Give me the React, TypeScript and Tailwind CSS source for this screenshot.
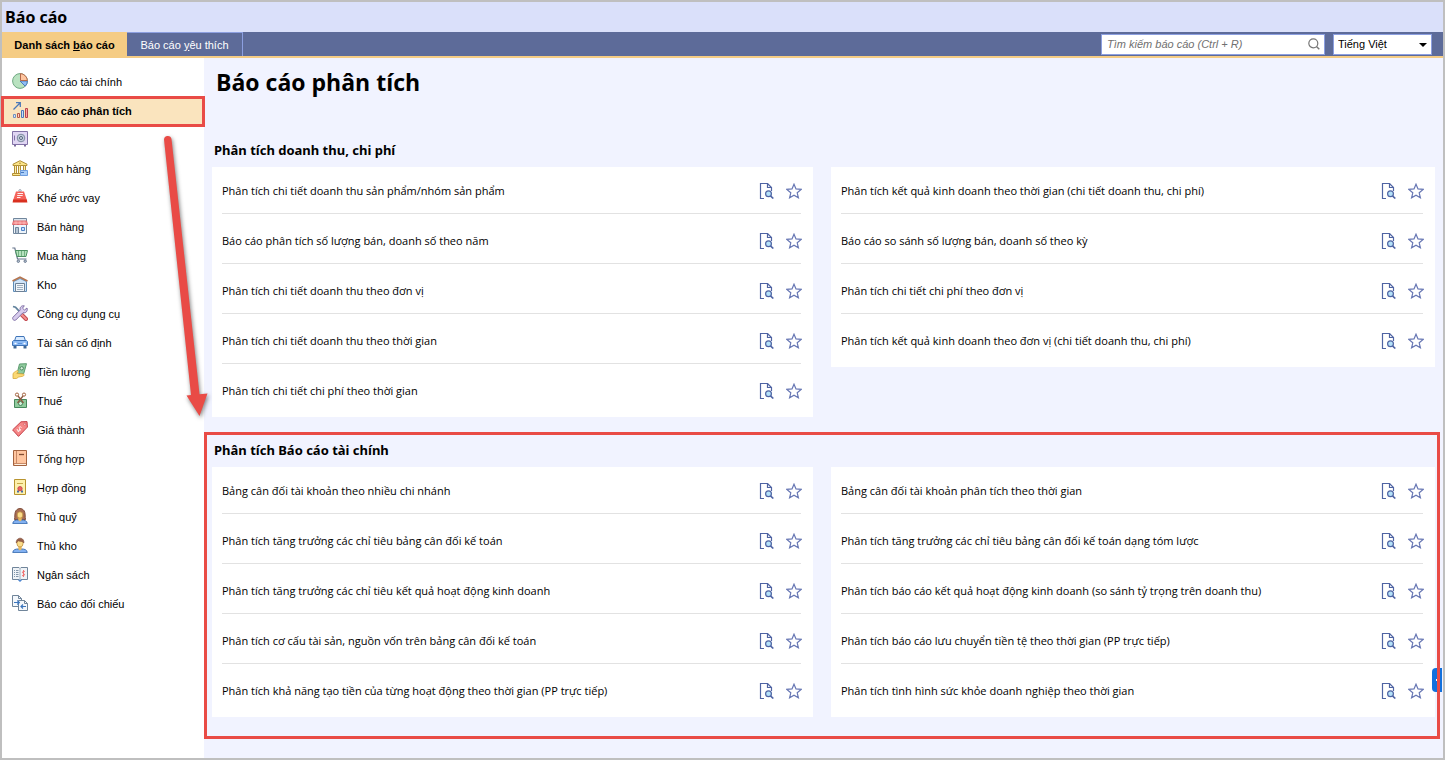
import React, { useState } from 'react';

const Icon = ({ children }: { children: React.ReactNode }) => (
    <svg viewBox="0 0 16 16" className="w-4 h-4 shrink-0 mb-[3px]" fill="none" aria-hidden="true">
        {children}
    </svg>
);

const PieIcon = () => (
    <Icon>
        <circle cx="8" cy="8" r="7.4" fill="#b9e2c0" stroke="#6fa882" />
        <path d="M8 8h7.4a7.4 7.4 0 0 1-2.2 5.2z" fill="#8fbdf5" stroke="#4a78b8" />
        <path d="M8.5 7.5V.6a7.4 7.4 0 0 1 6.9 6.9z" fill="#ffc6a0" stroke="#b5694a" />
    </Icon>
);

const GrowthIcon = () => (
    <Icon>
        <path d="M1.5 7.5L8 1M4 .7H8.3V5" stroke="#4a78b8" strokeWidth="1.3" />
        <path d="M1.5 12.5h2v3h-2z" fill="#dbe8f8" stroke="#6f8fbe" />
        <path d="M5.500 11.500h2v4h-2z" fill="#ffd2c0" stroke="#b5594a" />
        <path d="M9.5 8.500h2v7h-2z" fill="#c9dffa" stroke="#4a78b8" />
        <path d="M13.500 6.500h2v9h-2z" fill="#f8a5a5" stroke="#b9434a" />
    </Icon>
);

const SafeIcon = () => (
    <Icon>
        <path d="M3 13.5V15.5M13 13.5V15.5" stroke="#7b6a9c" strokeWidth="2" />
        <path d="M.5 .5h15v13H.5z" fill="#e0d6f3" stroke="#8272a6" />
        <circle cx="9" cy="7" r="3.8" fill="#c3cddb" stroke="#7d8ba0" />
        <circle cx="9" cy="7" r="1.500" fill="#dde5ef" stroke="#56657c" />
        <path d="M2.500 4.500v5" stroke="#8272a6" />
    </Icon>
);

const BankIcon = () => (
    <Icon>
        <path d="M8 .7l7 3.500v1.300H1V4.200z" fill="#fbe488" stroke="#b28f35" />
        <path d="M2.500 5.500v8h2v-8zM6.500 5.500v8h2v-8zM11.500 5.500v6h2v-6z" fill="#fff0b0" stroke="#b28f35" />
        <path d="M.5 15.500v-2h8v2z" fill="#fbe488" stroke="#b28f35" />
        <path d="M8.500 10.500h7v5h-7z" fill="#a9cdf8" stroke="#6d9de0" />
        <path d="M9 12.500h3" stroke="#4779c0" />
        <circle cx="8" cy="3.300" r=".8" fill="#b28f35" />
    </Icon>
);

const LoanIcon = () => (
    <Icon>
        <circle cx="8" cy="1.800" r="1.200" stroke="#9aa3b0" />
        <path d="M4 2.500h8L15.200 12H.8z" fill="#f4625a" />
        <path d="M1.200 10.500h13.600l.6 3H.6z" fill="#d9301f" />
        <path d="M5.500 4.500h5.500M5.200 6.500h5.500M5 8.500h3.500" stroke="#fff" strokeWidth=".9" />
    </Icon>
);

const ShopIcon = () => (
    <Icon>
        <path d="M1.500 .5h13v3h-13z" fill="#dbe5ee" stroke="#71869c" />
        <path d="M1.500 6.500v9h13v-9z" fill="#eef4fa" stroke="#71869c" />
        <path d="M1.500 3h13l1 3.500H.5z" fill="#f79c9c" stroke="#dd6a6e" />
        <path d="M4 3.500v3M8 3.500v3M12 3.500v3" stroke="#fbbaba" />
        <path d="M3.500 9.500h3v6h-3z" fill="#b7c7d6" stroke="#71869c" />
        <path d="M9.500 9.500h3v3h-3z" fill="#c7e0ff" stroke="#4f84c9" />
    </Icon>
);

const CartIcon = () => (
    <Icon>
        <path d="M.3 1h2.500l2.700 11h9" stroke="#66758c" strokeWidth="1.200" />
        <path d="M3.500 3.500h12l-1.500 6H5z" fill="#b5e2bd" stroke="#4c9261" />
        <path d="M6.500 4v5M9.500 4v5M12.500 4v5" stroke="#6cab7d" strokeWidth=".9" />
        <circle cx="6.300" cy="14.200" r="1.200" fill="#c5d2df" stroke="#66758c" />
        <circle cx="13.200" cy="14.200" r="1.200" fill="#c5d2df" stroke="#66758c" />
    </Icon>
);

const WarehouseIcon = () => (
    <Icon>
        <path d="M1.500 5.500L8 2.500l6.500 3v10h-13z" fill="#d0e5fa" stroke="#5f8db8" />
        <path d="M.5 5L8 1.200 15.500 5" stroke="#b5754f" strokeWidth="1.600" />
        <path d="M3.500 7.500h9v8h-9z" fill="#f2f6fa" stroke="#6c8197" />
        <path d="M5 9.500h6M5 11.500h6M5 13.500h6" stroke="#9fb0c0" />
    </Icon>
);

const ToolsIcon = () => (
    <Icon>
        <path d="M1 1.500l2.500.7 5 5.500" stroke="#61829c" strokeWidth="1.800" />
        <path d="M9.500 9.500l4.500 4.500" stroke="#c2474f" strokeWidth="4" strokeLinecap="round" />
        <path d="M9.500 9.500l4.500 4.500" stroke="#f38f8f" strokeWidth="2" strokeLinecap="round" />
        <path
            d="M15 3l-2.500 2-2-1.800L12.300.8C9.500.2 7.500 2.500 8.200 5L1 12.200C-.3 14 2 16.300 3.800 15L11 7.700c2.800.8 5-1.700 4-4.700z"
            fill="#d8ccee"
            stroke="#8272a6"
        />
    </Icon>
);

const CarIcon = () => (
    <Icon>
        <path d="M2.500 11.500v2h1v-2M12.500 11.500v2h1v-2" stroke="#3f6795" strokeWidth="2" />
        <path d="M4 2.500h8l1.500 4.500h-11z" fill="#d9ebff" stroke="#3f74b8" />
        <path d="M.5 7.500l1-1h13l1 1v4H.5z" fill="#8ab9f4" stroke="#3f74b8" />
        <path d="M2.500 9.500h2M11.500 9.500h2" stroke="#fff" strokeWidth="1.500" />
        <path d="M6 9.500h4" stroke="#5c93dc" />
    </Icon>
);

const SalaryIcon = () => (
    <Icon>
        <path d="M7.500 1l7-.3-2.800 10H5z" fill="#8fcb9d" stroke="#5c9b6f" />
        <circle cx="9.700" cy="5.300" r="1.700" fill="#d8f0dc" stroke="#4c8660" />
        <path
            d="M1 15.500v-5c2-2 3-2.500 4.500-3l.8 1-1.500 2 6.700.5c1 .6.5 2-.8 2.300l-4 .7-2.200 1.500z"
            fill="#fbd873"
            stroke="#d6a83b"
            strokeWidth=".8"
        />
    </Icon>
);

const TaxIcon = () => (
    <Icon>
        <path d="M2.500 7.500h12v8h-12z" fill="#8fcb9d" stroke="#46875b" />
        <circle cx="8.500" cy="11.500" r="2" fill="#d8f0dc" stroke="#46875b" />
        <path d="M6 4l5.500 7M11 4l-5.500 7" stroke="#8b5a42" strokeWidth="1.300" />
        <circle cx="5" cy="2.600" r="1.600" stroke="#a3633f" />
        <circle cx="12" cy="2.600" r="1.600" stroke="#a3633f" />
    </Icon>
);

const TagIcon = () => (
    <Icon>
        <path d="M9 .8l6-.2.4 5.500-8.900 9.300L.6 8.900z" fill="#f58686" stroke="#c43f48" />
        <circle cx="12.800" cy="3.200" r="1" fill="#fff" stroke="#c43f48" strokeWidth=".6" />
        <path d="M9.500 6.500c-1.500-1.500-3-.3-2 1s.5 2.800-1.500 2.500M5 8l1.500 3M7 8.700l2 .3" stroke="#fff" strokeWidth=".9" />
    </Icon>
);

const BookIcon = () => (
    <Icon>
        <path d="M1.500 .5h13v15h-13z" fill="#ffc6a0" stroke="#a3633f" />
        <path d="M4.500 1v12" stroke="#c98a66" />
        <path d="M7 4.500h5" stroke="#7f4c33" strokeWidth="1.300" />
        <path d="M2 13.500h12" stroke="#c98a66" />
        <path d="M3 14.500h11" stroke="#fff0e0" />
    </Icon>
);

const ContractIcon = () => (
    <Icon>
        <path d="M2.500 .5h11v15h-11z" fill="#fdf0ad" stroke="#b8942f" />
        <path d="M5 4.500h6" stroke="#c9a94a" />
        <path d="M5 12.500h2M9 12.500h2" stroke="#456fa9" strokeWidth="1.800" />
        <circle cx="8" cy="9.700" r="2.200" fill="#f06060" stroke="#b9434a" strokeWidth=".8" />
    </Icon>
);

const WomanIcon = () => (
    <Icon>
        <path d="M2.500 11.500C3.200 9 2.300 5 4 2.600c2-2.700 6-2.700 8 0C13.700 5 12.800 9 13.500 11.500z" fill="#a86e54" stroke="#7f4c3a" />
        <path d="M.8 15.600c0-3 3-3.600 5.200-3.600h4c2.200 0 5.200.6 5.200 3.600z" fill="#82b1f2" stroke="#4575b5" />
        <path d="M6.300 8h3.400v4.300L8 13.500l-1.700-1.200z" fill="#e9b95e" />
        <ellipse cx="8" cy="7" rx="2.800" ry="3.200" fill="#fbdc8a" stroke="#b98b3a" strokeWidth=".7" />
    </Icon>
);

const ManIcon = () => (
    <Icon>
        <path d="M.8 15.600c0-3 3-3.600 5.200-3.600h4c2.200 0 5.200.6 5.200 3.600z" fill="#82b1f2" stroke="#4575b5" />
        <path d="M6.300 8h3.400v4.300L8 13.500l-1.700-1.200z" fill="#e9b95e" />
        <ellipse cx="8" cy="6" rx="3.200" ry="4" fill="#fbdc8a" stroke="#b98b3a" strokeWidth=".7" />
        <path d="M4.300 6C3.500 0 12.500-.8 11.900 6 11 4 8 4.700 6 3.700z" fill="#98614a" stroke="#7f4c3a" strokeWidth=".6" />
    </Icon>
);

const BudgetIcon = () => (
    <Icon>
        <path d="M.5 1.500H7l1 1 1-1h6.500v12H9l-1 1-1-1H.5z" fill="#eff3f7" stroke="#70859a" />
        <path d="M8 3v11" stroke="#9fb0c0" />
        <path d="M2 4.500h1M4 4.500h2.500M2 6.500h1M4 6.500h2.500M2 8.500h1M4 8.500h2.500M2 10.500h1M4 10.500h2.500" stroke="#8095a9" />
        <path d="M13 5.500c-2.500-1-3.500 1.300-1.500 2s1 2.900-1.500 2M11.500 4v7" stroke="#ee6b6b" strokeWidth=".9" />
        <path d="M6.500 13.800L8 15.200l1.500-1.400" stroke="#4a84d0" strokeWidth="1.200" />
    </Icon>
);

const CompareIcon = () => (
    <Icon>
        <path d="M.5.5h6l3 3v8h-9z" fill="#f4f8fc" stroke="#70859a" />
        <path d="M6.500 5.500h6l3 3v7h-9z" fill="#f4f8fc" stroke="#70859a" />
        <path d="M6.500.5v3h3M12.500 5.500v3h3" stroke="#70859a" />
        <path d="M2 7.500h5M5.300 5.500l2 2-2 2M14 11.500H9M11 9.500l-2 2 2 2" stroke="#3c76bd" strokeWidth="1.200" />
    </Icon>
);

const categories = [
    { name: 'Báo cáo tài chính', icon: PieIcon },
    { name: 'Báo cáo phân tích', icon: GrowthIcon },
    { name: 'Quỹ', icon: SafeIcon },
    { name: 'Ngân hàng', icon: BankIcon },
    { name: 'Khế ước vay', icon: LoanIcon },
    { name: 'Bán hàng', icon: ShopIcon },
    { name: 'Mua hàng', icon: CartIcon },
    { name: 'Kho', icon: WarehouseIcon },
    { name: 'Công cụ dụng cụ', icon: ToolsIcon },
    { name: 'Tài sản cố định', icon: CarIcon },
    { name: 'Tiền lương', icon: SalaryIcon },
    { name: 'Thuế', icon: TaxIcon },
    { name: 'Giá thành', icon: TagIcon },
    { name: 'Tổng hợp', icon: BookIcon },
    { name: 'Hợp đồng', icon: ContractIcon },
    { name: 'Thủ quỹ', icon: WomanIcon },
    { name: 'Thủ kho', icon: ManIcon },
    { name: 'Ngân sách', icon: BudgetIcon },
    { name: 'Báo cáo đối chiếu', icon: CompareIcon },
];

const revenueReports = [
    [
        'Phân tích chi tiết doanh thu sản phẩm/nhóm sản phẩm',
        'Báo cáo phân tích số lượng bán, doanh số theo năm',
        'Phân tích chi tiết doanh thu theo đơn vị',
        'Phân tích chi tiết doanh thu theo thời gian',
        'Phân tích chi tiết chi phí theo thời gian',
    ],
    [
        'Phân tích kết quả kinh doanh theo thời gian (chi tiết doanh thu, chi phí)',
        'Báo cáo so sánh số lượng bán, doanh số theo kỳ',
        'Phân tích chi tiết chi phí theo đơn vị',
        'Phân tích kết quả kinh doanh theo đơn vị (chi tiết doanh thu, chi phí)',
    ],
];

const financeReports = [
    [
        'Bảng cân đối tài khoản theo nhiều chi nhánh',
        'Phân tích tăng trưởng các chỉ tiêu bảng cân đối kế toán',
        'Phân tích tăng trưởng các chỉ tiêu kết quả hoạt động kinh doanh',
        'Phân tích cơ cấu tài sản, nguồn vốn trên bảng cân đối kế toán',
        'Phân tích khả năng tạo tiền của từng hoạt động theo thời gian (PP trực tiếp)',
    ],
    [
        'Bảng cân đối tài khoản phân tích theo thời gian',
        'Phân tích tăng trưởng các chỉ tiêu bảng cân đối kế toán dạng tóm lược',
        'Phân tích báo cáo kết quả hoạt động kinh doanh (so sánh tỷ trọng trên doanh thu)',
        'Phân tích báo cáo lưu chuyển tiền tệ theo thời gian (PP trực tiếp)',
        'Phân tích tình hình sức khỏe doanh nghiệp theo thời gian',
    ],
];

const ReportCard = ({ reports }: { reports: string[] }) => (
    <ul className="bg-white pl-[10px] pr-3">
        {reports.map((report) => (
            <li key={report} className="group pb-[3px]">
                <div className="h-[47px] pt-[2px] flex items-center border-b border-[#e2e2e2] group-last:border-transparent">
                    <a href="#" className="flex-1 truncate text-[11px] leading-4">{report}</a>
                    <button aria-label="Xem báo cáo" className="mr-3">
                        <svg viewBox="0 0 16 16" className="w-4 h-4" fill="none">
                            <path d="M6 15.500H2.500V.5h7l4 4V8" stroke="#4f64a3" strokeWidth="1.200" />
                            <path d="M9.500.5v4h4" stroke="#4f64a3" strokeWidth="1.200" />
                            <path d="M12.500 12.800l2.800 2.700" stroke="#4f64a3" strokeWidth="1.600" />
                            <circle cx="10.500" cy="10.800" r="2.900" fill="#b5e2fa" stroke="#4f64a3" strokeWidth="1.200" />
                        </svg>
                    </button>
                    <button aria-label="Yêu thích" className="-mr-px">
                        <svg viewBox="0 0 16 16" className="w-4 h-4" fill="none">
                            <path
                                d="M8 1.200l2 4.700 5.200.5-4 3.400 1.200 5L8 12.200l-4.400 2.600 1.200-5-4-3.400L6 5.900z"
                                stroke="#6676b3"
                                strokeWidth="1.200"
                            />
                        </svg>
                    </button>
                </div>
            </li>
        ))}
    </ul>
);

const ReportSection = ({ title, columns }: { title: string; columns: string[][] }) => (
    <section className="pb-[15px]">
        <h2 className="h-[35px] pt-[9px] pl-[2px] text-[13px] leading-[18px] font-bold font-['Noto_Sans',sans-serif]">
            {title}
        </h2>
        <div className="grid grid-cols-[601fr_604fr] gap-[18px] items-start">
            {columns.map((reports, i) => (
                <ReportCard key={i} reports={reports} />
            ))}
        </div>
    </section>
);

export default function App() {
    const [active, setActive] = useState('Báo cáo phân tích');
    const [keyword, setKeyword] = useState('');

    return (
        <div className="min-h-screen flex flex-col border-2 border-[#bfbfbf] bg-[#f1f3ff] text-black font-['Open_Sans','Noto_Sans',sans-serif]">
            <header className="h-[30px] flex items-center pl-[3px] bg-[#dae0fa] text-base font-bold">Báo cáo</header>

            <nav className="h-[26px] flex items-stretch bg-[#5d6b99] border-b-2 border-[#f5cc84] font-['Liberation_Sans',sans-serif]">
                <button className="w-[125px] pt-[2px] bg-[#f5cc84] font-bold text-[11px]">
                    Danh sách <u>b</u>áo cáo
                </button>
                <button className="w-[116px] pt-px border-t border-r border-[#8c9fe0] text-white text-[11px]">
                    Báo cáo <u>y</u>êu thích
                </button>
                <div className="ml-auto flex items-center gap-2 pr-[11px]">
                    <div className="relative">
                        <input
                            type="text"
                            aria-label="Tìm kiếm báo cáo"
                            placeholder="Tìm kiếm báo cáo (Ctrl + R)"
                            value={keyword}
                            onChange={(e) => setKeyword(e.target.value)}
                            className="block w-56 h-[21px] pl-[5px] pr-6 bg-white border border-[#8c9fe0] text-[11px] placeholder:italic placeholder:text-[#707070]"
                        />
                        <svg viewBox="0 0 12 12" className="absolute right-[5px] top-1 w-3 h-3" fill="none" stroke="#777">
                            <circle cx="5.300" cy="5.300" r="4.500" strokeWidth="1.200" />
                            <path d="M8.700 8.700l2.600 2.600" strokeWidth="1.400" />
                        </svg>
                    </div>
                    <div className="relative">
                        <select
                            aria-label="Ngôn ngữ"
                            className="block appearance-none w-[99px] h-[21px] pl-1 bg-white border border-[#8c9fe0] text-[11px]"
                        >
                            <option>Tiếng Việt</option>
                            <option>English</option>
                        </select>
                        <svg viewBox="0 0 8 4" className="absolute right-[5px] top-[9px] w-2 h-1 pointer-events-none">
                            <path d="M0 0h8L4 4z" fill="#000" />
                        </svg>
                    </div>
                </div>
            </nav>

            <div className="relative flex-1 flex">
                <aside className="w-[202px] shrink-0 pt-[10px] bg-white font-['Liberation_Sans',sans-serif]">
                    <ul>
                        {categories.map(({ name, icon: CategoryIcon }) => (
                            <li key={name} className="relative">
                                <button
                                    onClick={() => setActive(name)}
                                    className={`w-full h-[29px] flex items-center gap-[9px] pl-[10px] text-[11px] ${
                                        active === name ? 'bg-[#fae4be] font-bold' : ''
                                    }`}
                                >
                                    <CategoryIcon />
                                    {name}
                                </button>
                                {active === name && (
                                    <div className="absolute -inset-px border-3 border-[#e94b46] pointer-events-none"></div>
                                )}
                            </li>
                        ))}
                    </ul>
                </aside>

                <main className="flex-1 min-w-0 px-2">
                    <h1 className="h-[74px] pt-1 pl-1 text-[23px] leading-10 font-bold">{active}</h1>
                    <ReportSection title="Phân tích doanh thu, chi phí" columns={revenueReports} />
                    <div className="relative">
                        <ReportSection title="Phân tích Báo cáo tài chính" columns={financeReports} />
                        <button
                            aria-label="Mở bảng trợ giúp"
                            className="absolute -right-[7px] bottom-10 w-[10px] h-6 rounded-l bg-[#1270dc] flex items-center"
                        >
                            <svg viewBox="0 0 6 6" className="w-[6px] h-[6px] ml-[2px]" fill="none">
                                <path d="M4 1L2 3l2 2M2 3h4" stroke="#fff" />
                            </svg>
                        </button>
                        <div className="absolute -left-2 -right-[5px] top-0 -bottom-[7px] border-3 border-[#e94b46] pointer-events-none"></div>
                    </div>
                </main>

                {/* Arrow from the selected category to the report group */}
                <svg
                    viewBox="0 0 60 300"
                    className="absolute left-[154px] top-[71px] w-[60px] h-[300px] pointer-events-none drop-shadow-[1px_2px_2px_rgba(0,0,0,0.5)]"
                >
                    <path
                        d="M8 10.500a3.800 3.800 0 0 1 7.500-.5L43.500 265.300l8-.8-8 22.500-13-20.500 4.500-.4z"
                        fill="#e94b46"
                    />
                </svg>
            </div>
        </div>
    );
}
